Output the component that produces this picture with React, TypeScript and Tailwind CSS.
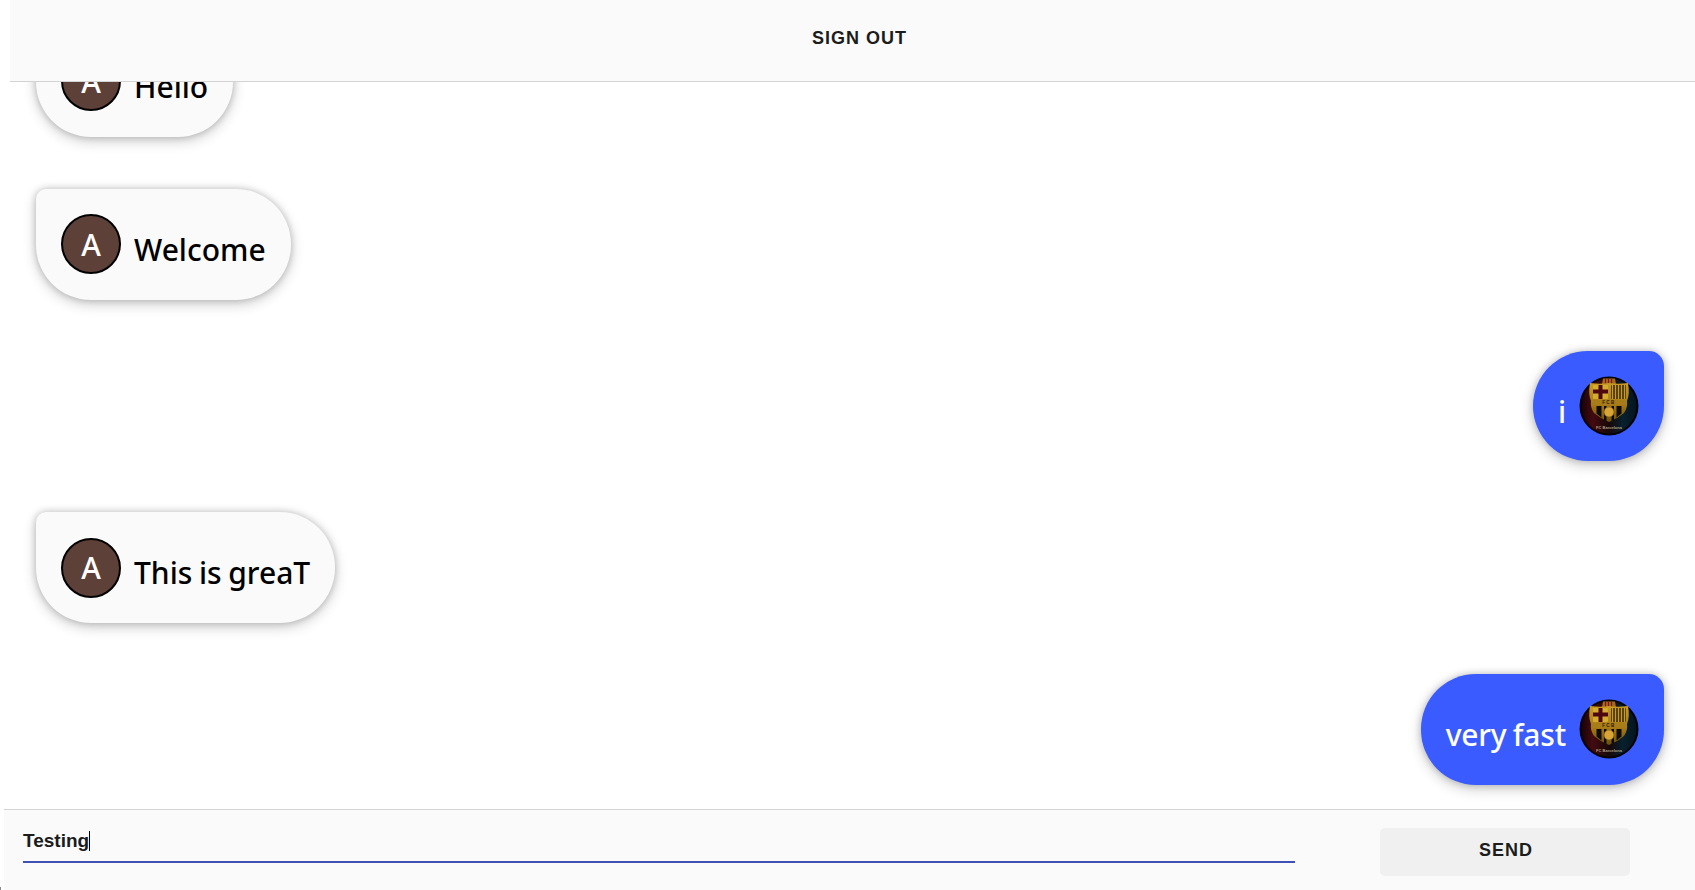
import React from "react";

function Crest({ id }: { id: string }) {
  return (
    <svg viewBox="0 0 60 60" className="w-[60px] h-[60px] block">
      <defs>
        <linearGradient id={`bg${id}`} x1="0" y1="0" x2="1" y2="0">
          <stop offset="0" stopColor="#16040a" />
          <stop offset="0.2" stopColor="#430a10" />
          <stop offset="0.5" stopColor="#180808" />
          <stop offset="0.75" stopColor="#08202e" />
          <stop offset="1" stopColor="#04141e" />
        </linearGradient>
        <linearGradient id={`gold${id}`} x1="0" y1="0" x2="0" y2="1">
          <stop offset="0" stopColor="#c99a24" />
          <stop offset="0.55" stopColor="#a87a16" />
          <stop offset="1" stopColor="#6c4e0c" />
        </linearGradient>
      </defs>
      <circle cx="30" cy="30" r="29.5" fill="#020204" />
      <circle cx="30" cy="30" r="27.5" fill={`url(#bg${id})`} />
      <path d="M24 2.5 H36 L37 8 H23 Z" fill="#a9691a" />
      <path d="M26.5 3 V8 M29.5 3 V8 M32.5 3 V8" stroke="#7c1414" strokeWidth="1.2" />
      <path d="M11 7 Q21 8.5 30 7 Q39 8.5 49 7 Q51 18 48 25 Q49 31 45 37 Q38 43 30 46 Q22 43 15 37 Q11 31 12 25 Q9 18 11 7 Z" fill={`url(#gold${id})`} />
      <rect x="14" y="9" width="15" height="14" rx="1" fill="#d4ac30" />
      <path d="M21.5 9 V23 M14 15.5 H29" stroke="#4c0710" strokeWidth="4" />
      <rect x="32" y="9" width="15" height="14" rx="1" fill="#2a1c08" />
      <path d="M33.5 9 V23 M36.5 9 V23 M39.5 9 V23 M42.5 9 V23 M45.5 9 V23" stroke="#c99a26" strokeWidth="1.6" />
      <rect x="14" y="24" width="32" height="5" fill="#a87c18" />
      <text x="30" y="28.3" textAnchor="middle" fontSize="4.5" fontWeight="700" fill="#2a1a04" fontFamily="Liberation Sans, sans-serif" letterSpacing="1.5">FCB</text>
      <path d="M17.5 30 V37.5 L22.5 41.5 V30 Z M25 30 V44 L27.5 45 V30 Z M32.5 30 V45 L35 44 V30 Z M37.5 30 V41.5 L42.5 37.5 V30 Z" fill="#0d0a06" />
      <circle cx="30" cy="36" r="5" fill="#d8a436" />
      <circle cx="30" cy="36" r="5" fill="none" stroke="#7c5a0e" strokeWidth="0.6" />
      <text x="30" y="53" textAnchor="middle" fontSize="4" fontWeight="700" fill="#d8cda8" opacity="0.75" fontFamily="Liberation Sans, sans-serif">FC Barcelona</text>
    </svg>
  );
}

function Incoming({ text, className = "" }: { text: string; className?: string }) {
  return (
    <div className={`flex justify-start pl-[36px] ${className}`}>
      <div className="flex items-center h-[110.7px] px-[25px] bg-[#fafafa] rounded-[55px] rounded-tl-[10px] shadow-[0_0_7px_rgba(0,0,0,0.2),0_4px_14px_rgba(0,0,0,0.2)]">
        <div className="w-[60px] h-[60px] rounded-full bg-[#5d4037] border-2 border-black flex items-center justify-center text-white text-[30px] font-medium font-['Noto_Sans','Open_Sans',sans-serif] shrink-0">
          A
        </div>
        <p className="ml-[13px] text-[30px] leading-[40px] mt-[11px] font-medium [word-spacing:-1.2px] text-black font-['Noto_Sans','Open_Sans',sans-serif]">{text}</p>
      </div>
    </div>
  );
}

function Outgoing({ text, id }: { text: string; id: string }) {
  return (
    <div className="flex justify-end pr-[31px]">
      <div className="flex items-center h-[110.7px] px-[25px] bg-[#3a5bff] rounded-[55px] rounded-tr-[15px] shadow-[0_0_7px_rgba(0,0,0,0.2),0_4px_14px_rgba(0,0,0,0.2)]">
        <p className="mr-[13px] text-[30px] leading-[40px] mt-[12px] font-medium [word-spacing:-1.2px] tracking-[-0.2px] text-white font-['Noto_Sans','Open_Sans',sans-serif]">{text}</p>
        <div className="w-[60px] h-[60px] rounded-full shrink-0">
          <Crest id={id} />
        </div>
      </div>
    </div>
  );
}

export default function App() {
  return (
    <div className="relative h-[890px] w-[1695px] overflow-hidden bg-white flex flex-col font-['Liberation_Sans',sans-serif]">
      <header className="absolute top-0 left-[10px] right-0 h-[82px] bg-[#fafafa] border-b border-[#d3d3d3] flex items-center justify-center z-10">
        <span className="text-[18px] font-bold tracking-[1px] text-[#1c1c1c] mt-[-5px] ml-[14px]">SIGN OUT</span>
      </header>
      <main className="flex-1 min-h-0 flex flex-col justify-end gap-[51px] pb-[24.3px] overflow-hidden">
        <Incoming text="Hello" className="mb-[1.4px]" />
        <Incoming text="Welcome" />
        <Outgoing text="i" id="a" />
        <Incoming text="This is greaT" />
        <Outgoing text="very fast" id="b" />
      </main>
      <footer className="ml-[4px] h-[81px] shrink-0 bg-[#fafafa] border-t border-[#d3d3d3] flex items-start">
        <div className="ml-[19px] w-[1272px] h-[53px] border-b-2 border-[#3f51b5] flex items-end">
          <span className="text-[19px] font-bold text-[#1c1c1c] leading-[20px] pb-[10px]">Testing</span>
          <span className="w-px h-[20px] bg-black mb-[10px]"></span>
        </div>
        <button className="ml-[85px] mt-[18px] w-[250px] h-[48px] pb-[4px] pl-[2px] bg-[#f0f0f0] rounded-[5px] text-[18px] font-bold tracking-[1px] text-[#1c1c1c] font-['Liberation_Sans',sans-serif]">SEND</button>
      </footer>
      <div className="absolute left-0 bottom-0 w-px h-[3px] bg-[#888888]"></div>
    </div>
  );
}
